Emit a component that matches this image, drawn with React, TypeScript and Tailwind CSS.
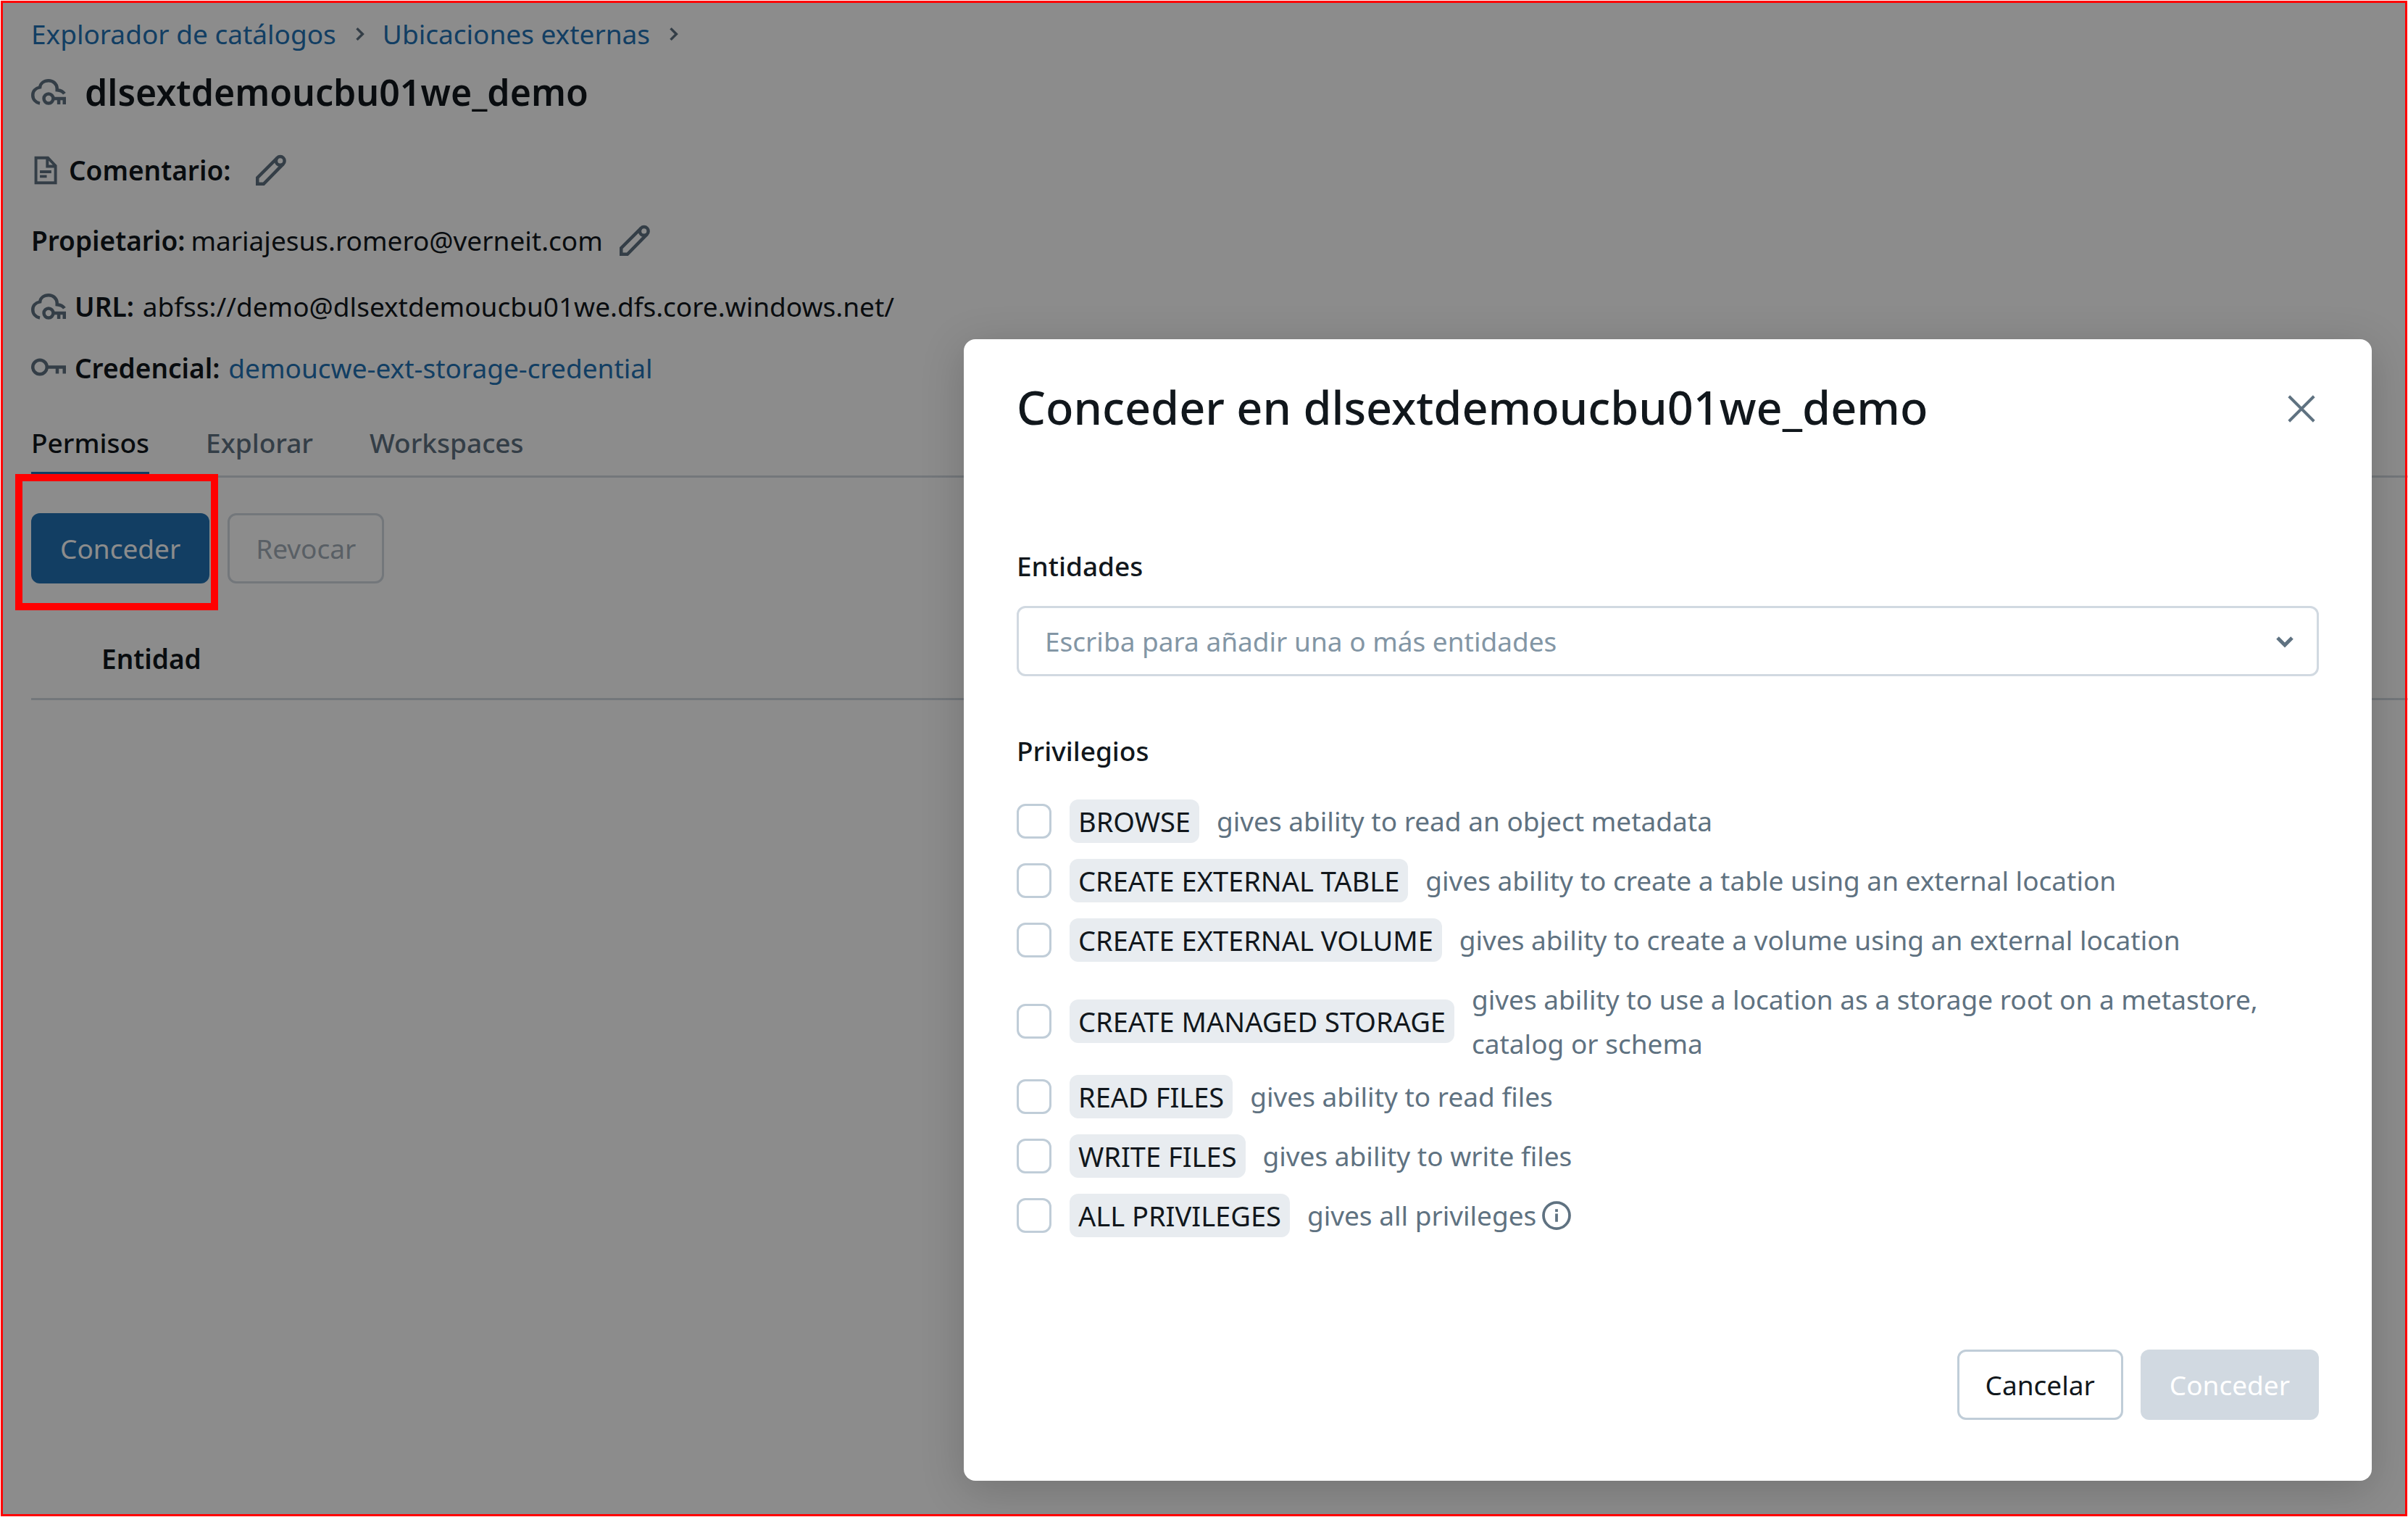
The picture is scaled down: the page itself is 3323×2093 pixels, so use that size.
import React from "react";

const PRIVILEGES = [
  { id: "browse", name: "BROWSE", text: "gives ability to read an object metadata" },
  { id: "ext-table", name: "CREATE EXTERNAL TABLE", text: "gives ability to create a table using an external location" },
  { id: "ext-volume", name: "CREATE EXTERNAL VOLUME", text: "gives ability to create a volume using an external location" },
  { id: "managed", name: "CREATE MANAGED STORAGE", text: "gives ability to use a location as a storage root on a metastore, catalog or schema" },
  { id: "read", name: "READ FILES", text: "gives ability to read files" },
  { id: "write", name: "WRITE FILES", text: "gives ability to write files" },
  { id: "all", name: "ALL PRIVILEGES", text: "gives all privileges", info: true },
];

function Icon({ children, className = "size-12" }: { children: React.ReactNode; className?: string }) {
  return (
    <svg viewBox="0 0 16 16" fill="none" stroke="currentColor" strokeWidth="1.5" aria-hidden="true" className={`shrink-0 text-[#5f7281] ${className}`}>
      {children}
    </svg>
  );
}

function CloudKeyIcon() {
  return (
    <Icon>
      <path d="M4 13.2C2 12.8.75 11.3.75 9.4c0-1.8 1.2-3.2 3.3-3.6C4.3 3.900 5.900 2.750 8 2.750c2.200 0 3.750 1.500 3.900 3.500v.8c1.500.1 2.700.6 3.400 1.700" />
      <circle cx="8" cy="11" r="2.150" />
      <path d="M10.200 11H15.250V13.700M12.700 11v2.700" />
    </Icon>
  );
}

function KeyIcon() {
  return (
    <Icon>
      <circle cx="4" cy="7.500" r="3.250" />
      <path d="M7.250 7.500h8v3M12 7.500v3" />
    </Icon>
  );
}

function FileIcon() {
  return (
    <Icon className="size-[42px]">
      <path d="M2.500 1.400h6.300l4 4.200v9H2.500zM8.500 1.400v4.500h4.300M4.600 8.750h6M4.600 11.200h3.600" />
    </Icon>
  );
}

function PencilIcon() {
  return (
    <Icon>
      <path d="M10.870 2.270 1.750 11.400v2.850h2.850l9.030-9.220" />
      <circle cx="12.250" cy="3.650" r="1.950" />
    </Icon>
  );
}

function Crumb({ children }: { children: string }) {
  return (
    <li className="flex items-center gap-[18px]">
      <a href="#" className="text-[#2272b4]">{children}</a>
      <Icon className="size-7"><path d="M6 3.500 10.500 8 6 12.500" strokeWidth="2" /></Icon>
    </li>
  );
}

export default function App() {
  return (
    <div className="relative flex min-h-screen flex-col overflow-hidden bg-white font-['Noto_Sans',sans-serif] text-[37px] leading-[60px] text-[#11171c]">
      <main className="flex-1 pl-[43px]">
        <nav aria-label="Ruta">
          <ol className="flex gap-[18px] pt-[17px]">
            <Crumb>Explorador de catálogos</Crumb>
            <Crumb>Ubicaciones externas</Crumb>
          </ol>
        </nav>
        <h1 className="flex items-center gap-[26px] pt-[10px] text-[50px] leading-[80px] font-semibold">
          <CloudKeyIcon />
          dlsextdemoucbu01we_demo
        </h1>
        <div className="flex items-center pt-[38px]">
          <FileIcon />
          <span className="pl-[10px] font-semibold">Comentario:</span>
          <button type="button" aria-label="Editar comentario" className="ml-8 flex"><PencilIcon /></button>
        </div>
        <div className="flex items-center pt-[37px]">
          <span className="font-semibold">Propietario:</span>
          <span className="pl-2">mariajesus.romero@verneit.com</span>
          <button type="button" aria-label="Editar propietario" className="ml-5 flex"><PencilIcon /></button>
        </div>
        <div className="flex items-center pt-[31px]">
          <CloudKeyIcon />
          <span className="pl-3 font-semibold">URL:</span>
          <span className="pl-3">abfss://demo@dlsextdemoucbu01we.dfs.core.windows.net/</span>
        </div>
        <div className="flex items-center pt-[25px]">
          <KeyIcon />
          <span className="pl-3 font-semibold">Credencial:</span>
          <a href="#" className="pl-3 text-[#2272b4]">demoucwe-ext-storage-credential</a>
        </div>
        <div role="tablist" className="mt-[43px] flex gap-[78px] border-b-[3px] border-[#d1d9e1] font-medium text-[#5f7281]">
          <button type="button" role="tab" aria-selected="true" className="-mb-[3px] border-b-8 border-[#2272b4] pb-[10px] text-[#11171c]">Permisos</button>
          <button type="button" role="tab" aria-selected="false" className="-mb-[3px] border-b-8 border-transparent pb-[10px]">Explorar</button>
          <button type="button" role="tab" aria-selected="false" className="-mb-[3px] border-b-8 border-transparent pb-[10px]">Workspaces</button>
        </div>
        <div className="flex gap-[25px] pt-[49px]">
          <div className="relative">
            <button type="button" className="h-[97px] rounded-xl bg-[#2272b4] px-10 text-white">Conceder</button>
            <div className="absolute -top-[54px] -right-3 -bottom-[37px] -left-[22px] z-20 border-[10px] border-[#ff0000]" />
          </div>
          <button type="button" disabled className="h-[97px] rounded-xl border-[3px] border-[#d1d9e1] px-9 text-[#a3aeb8]">Revocar</button>
        </div>
        <table className="mt-[46px] w-full text-left">
          <thead>
            <tr className="border-b-[3px] border-[#d1d9e1]">
              <th className="pt-7 pb-6 pl-[97px] font-semibold">Entidad</th>
            </tr>
          </thead>
        </table>
      </main>

      <div className="absolute inset-px z-10 bg-black/45" />
      <div className="pointer-events-none absolute inset-px z-30 border-[3px] border-[#ff0000]" />

      <section
        role="dialog"
        aria-modal="true"
        aria-labelledby="grant-title"
        className="absolute top-[468px] right-[50px] z-20 w-[1943px] rounded-2xl bg-white px-[73px] pb-[84px] shadow-[0_12px_60px_rgba(0,0,0,0.18)]"
      >
        <header className="flex items-center justify-between pt-[46px]">
          <h2 id="grant-title" className="pb-1 text-[63px] leading-[96px] font-medium">Conceder en dlsextdemoucbu01we_demo</h2>
          <button type="button" aria-label="Cerrar" className="flex">
            <Icon><path d="m2.250 2.250 11.500 11.500M13.750 2.250 2.250 13.750" strokeWidth="1.300" /></Icon>
          </button>
        </header>
        <label htmlFor="principals" className="block pt-[137px] font-medium">Entidades</label>
        <div className="mt-[25px] flex h-[97px] items-center rounded-xl border-[3px] border-[#d1d9e1] pr-6 pl-9">
          <input id="principals" type="text" placeholder="Escriba para añadir una o más entidades" className="min-w-0 flex-1 outline-none placeholder:text-[#8396a5]" />
          <Icon className="size-10"><path d="M4 6l4 4 4-4" strokeWidth="2" /></Icon>
        </div>
        <fieldset className="pt-[73px]">
          <legend className="float-left w-full font-medium">Privilegios</legend>
          <ul className="clear-both flex flex-col gap-3 pt-9">
            {PRIVILEGES.map((p) => (
              <li key={p.id} className="min-h-[70px]">
                <div className="flex items-center">
                  <input id={p.id} type="checkbox" className="size-12 shrink-0 appearance-none rounded-xl border-[3px] border-[#c0cdd8]" />
                  <label htmlFor={p.id} className="ml-[25px] flex items-center gap-6">
                    <span className="shrink-0 rounded-xl bg-[#e8ecf0] px-3 text-[38px]">{p.name}</span>
                    <span className="flex items-center gap-2 leading-[61px] text-[#5f7281]">
                      {p.text}
                      {p.info && (
                        <Icon className="size-10">
                          <circle cx="8" cy="8" r="7.200" />
                          <path d="M8 7v4.500M8 4.500v1.500" />
                        </Icon>
                      )}
                    </span>
                  </label>
                </div>
              </li>
            ))}
          </ul>
        </fieldset>
        <footer className="flex justify-end gap-6 pt-[146px]">
          <button type="button" className="h-[97px] rounded-xl border-[3px] border-[#c0cdd8] px-9">Cancelar</button>
          <button type="button" disabled className="h-[97px] rounded-xl bg-[#d1d9e1] px-10 text-white">Conceder</button>
        </footer>
      </section>
    </div>
  );
}
